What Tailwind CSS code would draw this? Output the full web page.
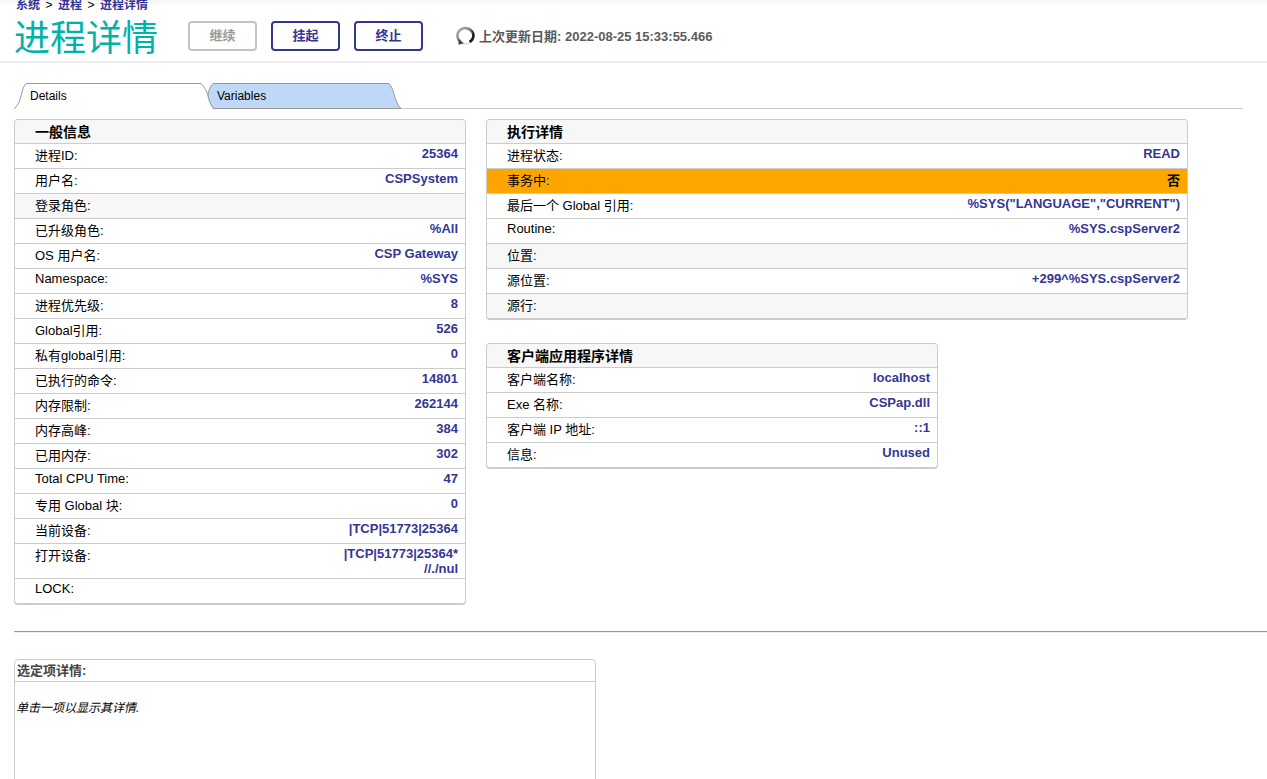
<!DOCTYPE html>
<html lang="zh-CN">
<head>
<meta charset="utf-8">
<title>进程详情</title>
<script src="https://cdn.jsdelivr.net/npm/@tailwindcss/browser@4"></script>
</head>
<body class="min-h-screen bg-white font-['Liberation_Sans','Noto_Sans_CJK_SC',sans-serif] text-[13px] text-black">
<header class="border-b-2 border-[#eeeeee] bg-linear-to-b from-[#f5f5f5] to-white to-10% pl-3.5">
  <nav aria-label="面包屑" class="flex h-2.5 items-center gap-1 pl-0.5 text-xs font-bold leading-[10px] text-[#333695]">
    <a href="#">系统</a><span class="w-[10px] text-center font-normal text-black">&gt;</span>
    <a href="#">进程</a><span class="w-[10px] text-center font-normal text-black">&gt;</span>
    <a href="#">进程详情</a>
  </nav>
  <div class="flex flex-wrap items-center">
    <h1 class="mr-[30px] pt-[7px] text-4xl leading-11 text-[#00b2a9]">进程详情</h1>
    <div class="flex gap-3.5">
      <button disabled class="h-[30px] w-[69px] rounded border-2 border-[#c4c4c4] bg-white font-bold text-[#999999]">继续</button>
      <button class="h-[30px] w-[69px] rounded border-2 border-[#333695] bg-white font-bold text-[#333695]">挂起</button>
      <button class="h-[30px] w-[69px] rounded border-2 border-[#333695] bg-white font-bold text-[#333695]">终止</button>
    </div>
    <svg class="ml-8 h-5 w-5" viewBox="0 0 20 20" fill="none" aria-hidden="true">
      <defs><linearGradient id="ring" x1="0" y1="0" x2="1" y2="0.6"><stop offset="0.1" stop-color="#a8a8a8"/><stop offset="0.55" stop-color="#8a8a8a"/><stop offset="0.95" stop-color="#1c1c1c"/></linearGradient></defs>
      <path d="M7 17.600H14" stroke="#d8d8d8" stroke-width="1.500"/>
      <path d="M5.500 15.500A8 7.500 0 1 1 14.500 16" stroke="url(#ring)" stroke-width="2.600"/>
      <path d="M3.200 12.800L8.800 17.200L3.600 18.800Z" fill="#444"/>
    </svg>
    <p class="ml-1 pt-0.5 font-bold text-[#5b5b5b]">上次更新日期: 2022-08-25 15:33:55.466</p>
  </div>
</header>

<main class="pl-3.5 pt-5">
  <div role="tablist" class="relative mr-6 flex h-[26px] border-b border-[#cccccc]">
    <svg class="absolute left-0 top-0 h-[26px] w-[388px]" viewBox="0 0 388 26" fill="none" stroke="#999" aria-hidden="true">
      <path d="M199 0.500C196 4 194 8 194 13C195 18 197 23 200 25.500H387C380 19 381 7 375 0.500Z" fill="#c0d8f8"/>
      <path d="M0 26C9 18 6 7 12 0.500H187C191 4 193 9 194 13C195 18 197 23 200 26" fill="#fff"/>
    </svg>
    <button role="tab" aria-selected="true" class="relative w-[200px] pl-4 text-left text-xs">Details</button>
    <button role="tab" aria-selected="false" class="relative w-[186px] pl-[3px] text-left text-xs">Variables</button>
  </div>

  <div class="mt-2.5 flex flex-wrap items-start gap-5">
    <section class="w-[452px] max-w-full overflow-hidden rounded border border-b-2 border-[#cccccc]">
      <table class="w-full text-left [&_td]:pr-[7px] [&_td]:pt-0.5 [&_td]:text-right [&_td]:align-top [&_td]:font-bold [&_td]:leading-[15px] [&_td]:text-[#333695] [&_tbody_th]:pl-5 [&_tbody_th]:pt-0.5 [&_tbody_th]:align-top [&_tbody_th]:font-normal [&_tbody_th]:leading-5 [&_tbody_tr]:h-[25px] [&_tbody_tr]:border-t [&_tbody_tr]:border-[#cccccc]">
        <thead><tr class="h-[23px] bg-[#f7f7f7]"><th colspan="2" class="pl-5 pt-0.5 text-sm leading-5">一般信息</th></tr></thead>
        <tbody>
          <tr><th>进程ID:</th><td>25364</td></tr>
          <tr><th>用户名:</th><td>CSPSystem</td></tr>
          <tr class="bg-[#f7f7f7]"><th>登录角色:</th><td></td></tr>
          <tr><th>已升级角色:</th><td>%All</td></tr>
          <tr><th>OS 用户名:</th><td>CSP Gateway</td></tr>
          <tr><th><span class="block leading-[15px]">Namespace:</span></th><td>%SYS</td></tr>
          <tr><th>进程优先级:</th><td>8</td></tr>
          <tr><th>Global引用:</th><td>526</td></tr>
          <tr><th>私有global引用:</th><td>0</td></tr>
          <tr><th>已执行的命令:</th><td>14801</td></tr>
          <tr><th>内存限制:</th><td>262144</td></tr>
          <tr><th>内存高峰:</th><td>384</td></tr>
          <tr><th>已用内存:</th><td>302</td></tr>
          <tr><th><span class="block leading-[15px]">Total CPU Time:</span></th><td>47</td></tr>
          <tr><th>专用 Global 块:</th><td>0</td></tr>
          <tr><th>当前设备:</th><td>|TCP|51773|25364</td></tr>
          <tr><th>打开设备:</th><td class="pb-0.5">|TCP|51773|25364*<br>//./nul</td></tr>
          <tr><th><span class="block leading-[15px]">LOCK:</span></th><td></td></tr>
        </tbody>
      </table>
    </section>

    <div class="flex min-w-0 flex-col gap-[23px]">
      <section class="w-[702px] max-w-full overflow-hidden rounded border border-b-2 border-[#cccccc]">
        <table class="w-full text-left [&_td]:pr-[7px] [&_td]:pt-0.5 [&_td]:text-right [&_td]:align-top [&_td]:font-bold [&_td]:leading-[15px] [&_td]:text-[#333695] [&_tbody_th]:pl-5 [&_tbody_th]:pt-0.5 [&_tbody_th]:align-top [&_tbody_th]:font-normal [&_tbody_th]:leading-5 [&_tbody_tr]:h-[25px] [&_tbody_tr]:border-t [&_tbody_tr]:border-[#cccccc]">
          <thead><tr class="h-[23px] bg-[#f7f7f7]"><th colspan="2" class="pl-5 pt-0.5 text-sm leading-5">执行详情</th></tr></thead>
          <tbody>
            <tr><th>进程状态:</th><td>READ</td></tr>
            <tr class="bg-[#ffa500]"><th>事务中:</th><td><span class="block leading-5 text-black">否</span></td></tr>
            <tr><th>最后一个 Global 引用:</th><td>%SYS("LANGUAGE","CURRENT")</td></tr>
            <tr><th><span class="block leading-[15px]">Routine:</span></th><td>%SYS.cspServer2</td></tr>
            <tr class="bg-[#f7f7f7]"><th>位置:</th><td></td></tr>
            <tr><th>源位置:</th><td>+299^%SYS.cspServer2</td></tr>
            <tr class="bg-[#f7f7f7]"><th>源行:</th><td></td></tr>
          </tbody>
        </table>
      </section>
      <section class="w-[452px] max-w-full overflow-hidden rounded border border-b-2 border-[#cccccc]">
        <table class="w-full text-left [&_td]:pr-[7px] [&_td]:pt-0.5 [&_td]:text-right [&_td]:align-top [&_td]:font-bold [&_td]:leading-[15px] [&_td]:text-[#333695] [&_tbody_th]:pl-5 [&_tbody_th]:pt-0.5 [&_tbody_th]:align-top [&_tbody_th]:font-normal [&_tbody_th]:leading-5 [&_tbody_tr]:h-[25px] [&_tbody_tr]:border-t [&_tbody_tr]:border-[#cccccc]">
          <thead><tr class="h-[23px] bg-[#f7f7f7]"><th colspan="2" class="pl-5 pt-0.5 text-sm leading-5">客户端应用程序详情</th></tr></thead>
          <tbody>
            <tr><th>客户端名称:</th><td>localhost</td></tr>
            <tr><th>Exe 名称:</th><td>CSPap.dll</td></tr>
            <tr><th>客户端 IP 地址:</th><td>::1</td></tr>
            <tr><th>信息:</th><td>Unused</td></tr>
          </tbody>
        </table>
      </section>
    </div>
  </div>

  <hr class="mt-[26px] h-0.5 border-t border-b border-t-[#999999] border-b-[#eeeeee]">

  <section class="mt-[26px] h-[120px] w-[582px] max-w-full rounded-t-[5px] border border-b-0 border-[#cccccc]">
    <h2 class="border-b border-[#cccccc] pl-0.5 pt-px font-bold leading-5 text-[#444444]">选定项详情:</h2>
    <p class="mt-[17px] pl-px text-xs italic leading-[18px]">单击一项以显示其详情.</p>
  </section>
</main>
</body>
</html>
